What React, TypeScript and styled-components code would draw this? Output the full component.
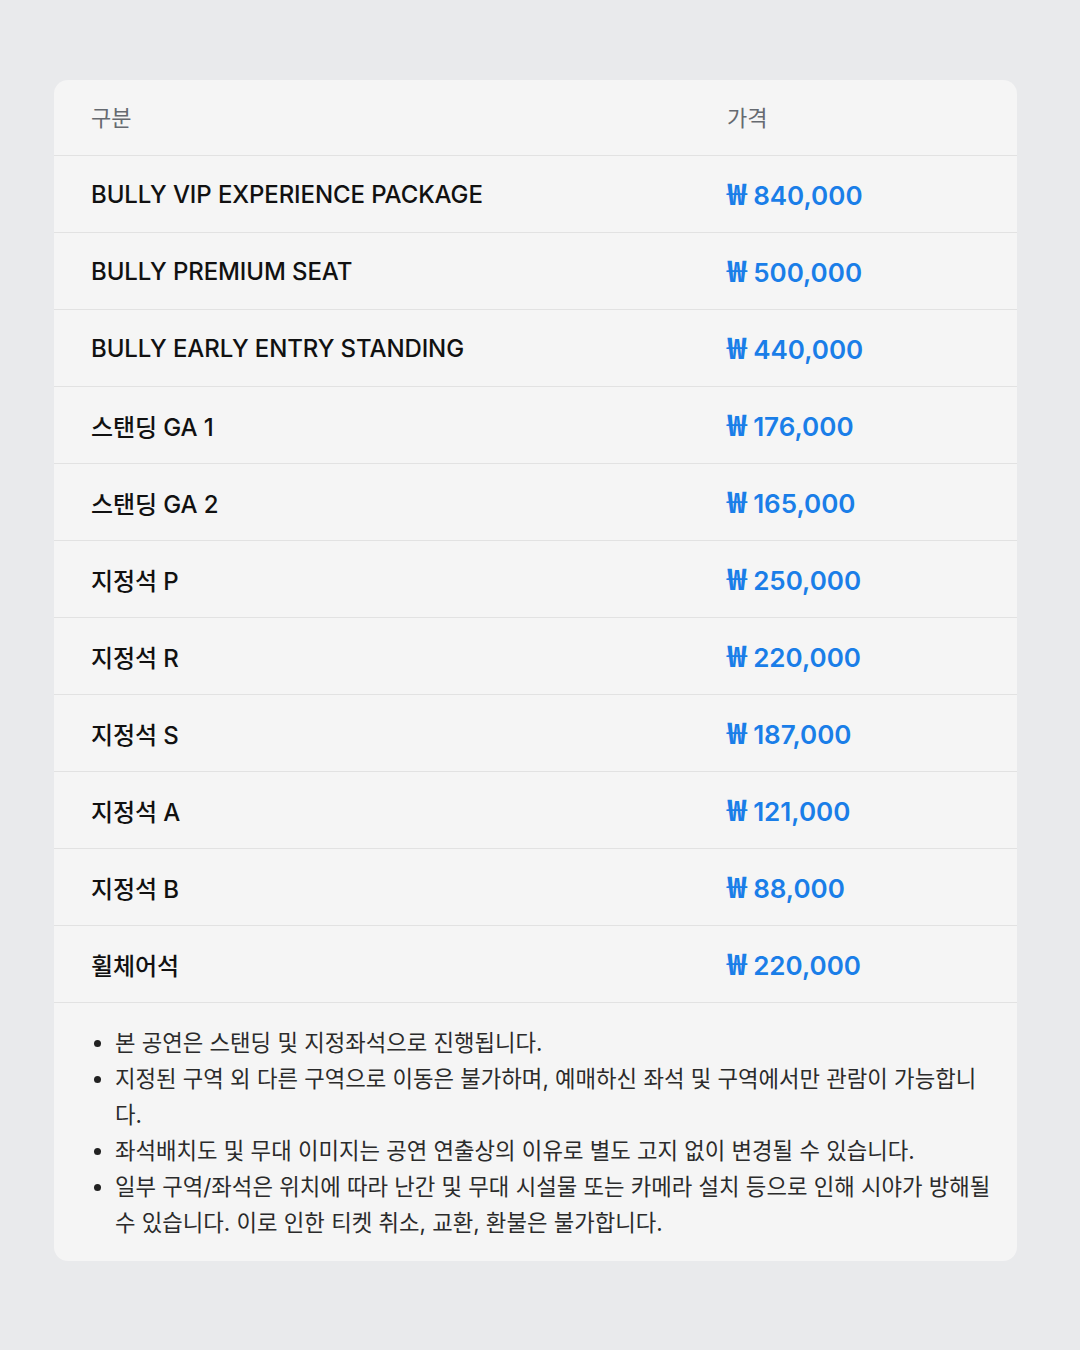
import * as React from "react";
import styled, { createGlobalStyle } from "styled-components";

const GlobalStyle = createGlobalStyle`
  html, body {
    margin: 0;
    padding: 0;
    background: #e9eaec;
  }
  body {
    font-family: Inter, "Noto Sans CJK KR", "Noto Sans", sans-serif;
    -webkit-font-smoothing: antialiased;
  }
`;

const Page = styled.main`
  min-height: 1350px;
  padding: 80px 63px 0 54px;
  box-sizing: border-box;
`;

const Card = styled.section`
  background: #f5f5f5;
  border-radius: 14px;
  overflow: hidden;
`;

const Row = styled.div<{ $head?: boolean }>`
  display: grid;
  grid-template-columns: 636px 1fr;
  align-items: center;
  height: ${(p) => (p.$head ? "76px" : "77px")};
  padding-left: 37px;
  border-bottom: 1px solid #e2e2e2;
  box-sizing: border-box;
`;

const HeadCell = styled.div`
  font-size: 22px;
  color: #666a70;
  font-weight: 400;
  padding-bottom: 3px;
`;

const Name = styled.div`
  font-size: 24px;
  font-weight: 500;
  color: #111;
  letter-spacing: -0.1px;
`;

const Price = styled.div`
  display: flex;
  align-items: baseline;
  font-size: 26px;
  line-height: 30px;
  font-weight: 600;
  color: #1a7ee8;
`;

const Won = styled.span`
  display: inline-block;
  font-family: "Noto Sans CJK KR", sans-serif;
  font-size: 29px;
  line-height: 30px;
  font-weight: 700;
  transform: scaleX(1.15);
  transform-origin: left center;
  margin-right: 9px;
`;

const Notes = styled.ul`
  margin: 0;
  padding: 22px 20px 20px 61px;
  list-style: none;
`;

const Note = styled.li`
  position: relative;
  font-size: 22.3px;
  line-height: 36px;
  color: #2b2b2b;
  word-break: break-all;

  &::before {
    content: "";
    position: absolute;
    left: -21px;
    top: 15px;
    width: 7px;
    height: 7px;
    border-radius: 50%;
    background: #222;
  }
`;

const tickets = [
  ["BULLY VIP EXPERIENCE PACKAGE", "840,000"],
  ["BULLY PREMIUM SEAT", "500,000"],
  ["BULLY EARLY ENTRY STANDING", "440,000"],
  ["스탠딩 GA 1", "176,000"],
  ["스탠딩 GA 2", "165,000"],
  ["지정석 P", "250,000"],
  ["지정석 R", "220,000"],
  ["지정석 S", "187,000"],
  ["지정석 A", "121,000"],
  ["지정석 B", "88,000"],
  ["휠체어석", "220,000"],
];

const notes = [
  "본 공연은 스탠딩 및 지정좌석으로 진행됩니다.",
  "지정된 구역 외 다른 구역으로 이동은 불가하며, 예매하신 좌석 및 구역에서만 관람이 가능합니다.",
  "좌석배치도 및 무대 이미지는 공연 연출상의 이유로 별도 고지 없이 변경될 수 있습니다.",
  "일부 구역/좌석은 위치에 따라 난간 및 무대 시설물 또는 카메라 설치 등으로 인해 시야가 방해될 수 있습니다. 이로 인한 티켓 취소, 교환, 환불은 불가합니다.",
];

export default function App() {
  return (
    <>
      <GlobalStyle />
      <Page>
        <Card>
          <Row $head>
            <HeadCell>구분</HeadCell>
            <HeadCell>가격</HeadCell>
          </Row>
          {tickets.map(([name, price]) => (
            <Row key={name}>
              <Name>{name}</Name>
              <Price>
                <Won>₩</Won>
                {price}
              </Price>
            </Row>
          ))}
          <Notes>
            {notes.map((n) => (
              <Note key={n}>{n}</Note>
            ))}
          </Notes>
        </Card>
      </Page>
    </>
  );
}
